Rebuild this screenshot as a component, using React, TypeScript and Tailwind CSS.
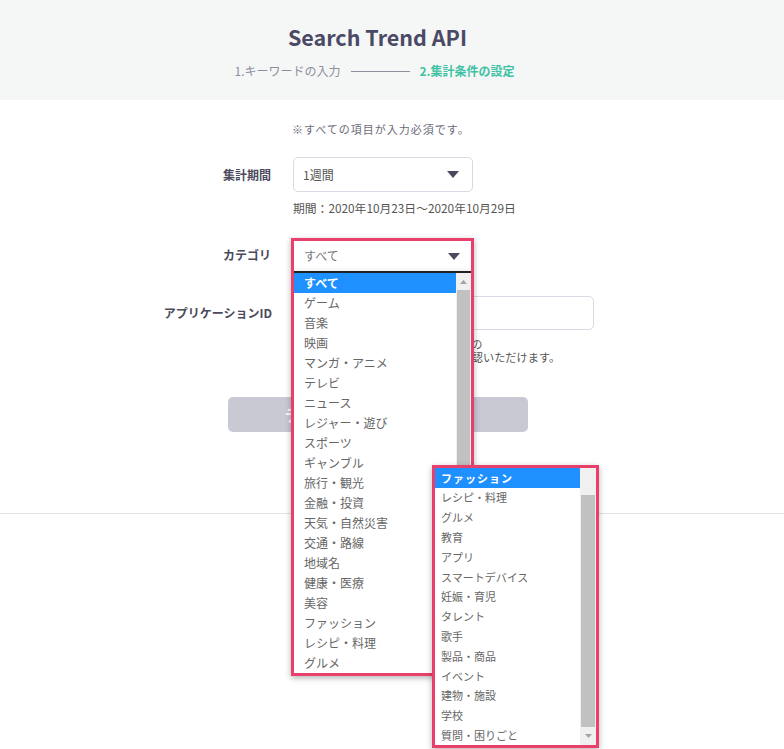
import React from "react";

const FONT = { fontFamily: '"Noto Sans CJK JP", "Noto Sans", sans-serif' };

const list1 = [
  "すべて", "ゲーム", "音楽", "映画", "マンガ・アニメ", "テレビ", "ニュース", "レジャー・遊び",
  "スポーツ", "ギャンブル", "旅行・観光", "金融・投資", "天気・自然災害", "交通・路線", "地域名",
  "健康・医療", "美容", "ファッション", "レシピ・料理", "グルメ",
];
const list2 = [
  "ファッション", "レシピ・料理", "グルメ", "教育", "アプリ", "スマートデバイス", "妊娠・育児",
  "タレント", "歌手", "製品・商品", "イベント", "建物・施設", "学校", "質問・困りごと",
];

function Caret({ className = "" }: { className?: string }) {
  return (
    <svg width="12" height="7" viewBox="0 0 12 7" className={className}>
      <polygon points="0,0 12,0 6,7" fill="#4a4a5e" />
    </svg>
  );
}

export default function App() {
  return (
    <div className="relative w-full min-h-[749px] bg-white overflow-hidden" style={FONT}>
      {/* header */}
      <div className="h-[100px] bg-[#f5f7f7]">
        <div className="w-[755px] flex flex-col items-center">
          <div className="pt-[22px] text-[21.5px] leading-[30px] font-bold text-[#4b4a66]">Search Trend API</div>
          <div className="mt-[11px] flex items-center text-[12px] leading-[16px] pr-[6px]">
            <span className="text-[#8e8e9c]">1.キーワードの入力</span>
            <span className="mx-[10px] w-[59px] h-px bg-[#8e8e9c]" />
            <span className="font-bold text-[#3fc2a3]">2.集計条件の設定</span>
          </div>
        </div>
      </div>

      {/* form */}
      <div className="mt-[21px] pl-[292px] text-[11px] tracking-[1px] leading-[16px] text-[#6b6b78]">※すべての項目が入力必須です。</div>

      <div className="mt-[20px] flex items-center">
        <div className="w-[271px] text-right text-[12px] font-bold text-[#4a4a5c]">集計期間</div>
        <div className="ml-[22px] w-[180px] h-[35px] border border-[#d9d9e3] rounded-[5px] flex items-center justify-between pl-[9px] pr-[13px] text-[12px] text-[#555]">
          <span>1週間</span>
          <Caret />
        </div>
      </div>
      <div className="mt-[8px] pl-[293px] text-[11.8px] leading-[16px] text-[#555]">期間：2020年10月23日～2020年10月29日</div>

      <div className="mt-[22px] flex items-center">
        <div className="w-[271px] text-right text-[12px] font-bold text-[#4a4a5c]">カテゴリ</div>
        <div className="ml-[22px] w-[180px] h-[34px] border border-[#d9d9e3] rounded-[5px]" />
      </div>

      <div className="mt-[24px] flex items-center">
        <div className="w-[272px] text-right text-[12px] font-bold text-[#4a4a5c]">アプリケーションID</div>
        <div className="ml-[21px] w-[301px] h-[34px] border border-[#d9d9e3] rounded-[5px]" />
      </div>
      <div className="mt-[8px] pl-[293px] text-[11.2px] leading-[13px] text-[#555] whitespace-nowrap">
        <div>アプリケーションIDは、マイページの</div>
        <div>アプリケーション管理画面からご確認いただけます。</div>
      </div>

      <div className="mt-[33px] ml-[228px] w-[300px] h-[35px] rounded-[5px] bg-[#c9c9d4] flex items-center justify-center text-[15.5px] font-bold text-white">
        データをダウンロードする
      </div>

      <div className="mt-[81px] h-px bg-[#e2e2ea]" />

      {/* dropdown 1 (annotated) */}
      <div className="absolute left-[291px] top-[238px] w-[183px] border-[3px] border-[#e8406b] bg-white shadow-[0_2px_6px_rgba(0,0,0,0.3)]">
        <div className="h-[30px] flex items-center justify-between pl-[10px] pr-[11px] text-[12px] text-[#777] shadow-[inset_0_-4px_4px_-3px_rgba(0,0,0,0.08)]">
          <span>すべて</span>
          <Caret />
        </div>
        <div className="h-[2px] bg-[#222]" />
        <div className="flex h-[400px]">
          <div className="flex-1">
            {list1.map((t, i) => (
              <div
                key={t}
                className={
                  "h-[20px] flex items-center pl-[10px] text-[12px] " +
                  (i === 0 ? "bg-[#1e90ff] text-white font-bold" : "text-[#666]")
                }
              >
                {t}
              </div>
            ))}
          </div>
          <div className="w-[15px] bg-[#f0f0f0] flex flex-col">
            <div className="h-[17px] flex items-center justify-center">
              <svg width="7" height="4" viewBox="0 0 7 4"><polygon points="0,4 7,4 3.5,0" fill="#a3a3a3" /></svg>
            </div>
            <div className="flex-1 mx-px bg-[#c1c1c1]" />
          </div>
        </div>
      </div>

      {/* dropdown 2 (annotated) */}
      <div className="absolute left-[432px] top-[465px] w-[167px] border-[3px] border-[#e8406b] bg-white shadow-[0_2px_6px_rgba(0,0,0,0.3)]">
        <div className="flex h-[277px]">
          <div className="flex-1">
            {list2.map((t, i) => (
              <div
                key={t}
                className={
                  "h-[19.8px] flex items-center pl-[6px] text-[11px] " +
                  (i === 0 ? "bg-[#1e90ff] text-white font-bold tracking-[1px]" : "text-[#666]")
                }
              >
                {t}
              </div>
            ))}
          </div>
          <div className="w-[16px] bg-[#f0f0f0] flex flex-col">
            <div className="h-[27px]" />
            <div className="flex-1 mx-px bg-[#c1c1c1]" />
            <div className="h-[18px] flex items-center justify-center">
              <svg width="7" height="4" viewBox="0 0 7 4"><polygon points="0,0 7,0 3.5,4" fill="#a3a3a3" /></svg>
            </div>
          </div>
        </div>
      </div>
    </div>
  );
}
